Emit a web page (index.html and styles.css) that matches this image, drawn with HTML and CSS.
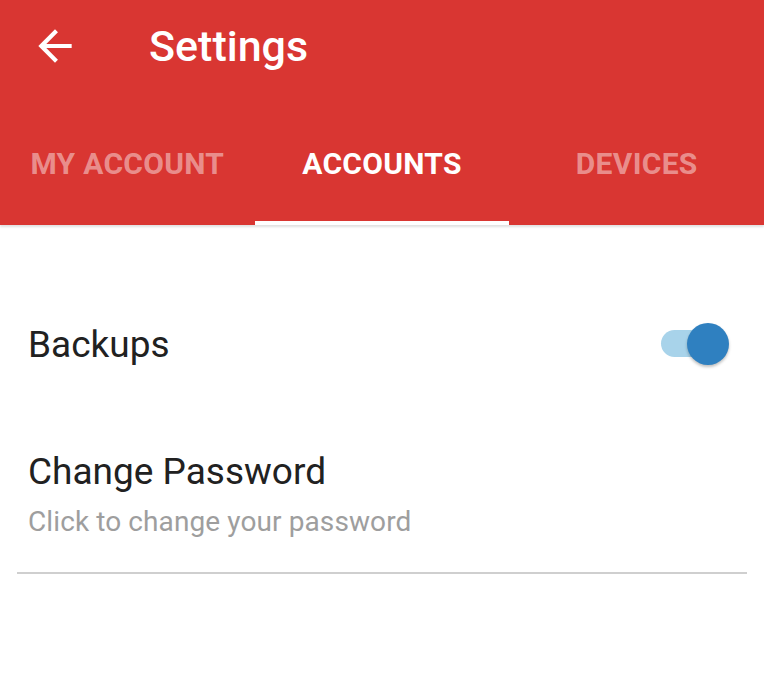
FILE: index.html
```html
<!DOCTYPE html>
<html>
<head>
<meta charset="utf-8">
<link rel="stylesheet" href="styles.css">
</head>
<body>
<header class="appbar">
  <div class="toolbar">
    <svg class="back" width="50" height="50" viewBox="0 0 24 24"><path d="M20 11H7.83l5.59-5.59L12 4l-8 8 8 8 1.41-1.41L7.83 13H20v-2z" fill="#fff"/></svg>
    <h1 class="title">Settings</h1>
  </div>
  <nav class="tabs">
    <div class="tab">MY ACCOUNT</div>
    <div class="tab active">ACCOUNTS</div>
    <div class="tab">DEVICES</div>
  </nav>
</header>
<main class="content">
  <div class="row row-switch">
    <span class="label">Backups</span>
    <span class="switch"><span class="track"></span><span class="thumb"></span></span>
  </div>
  <div class="row row-two">
    <span class="label">Change Password</span>
    <span class="sub">Click to change your password</span>
  </div>
  <hr class="divider">
</main>
</body>
</html>
```
FILE: styles.css
```css
html, body { margin: 0; padding: 0; background: #fff; }
body { font-family: Roboto, "Noto Sans", sans-serif; width: 764px; height: 686px; overflow: hidden; }
.appbar { background: #d93632; height: 225px; display: flex; flex-direction: column; box-shadow: 0 2px 2px rgba(0,0,0,0.12); position: relative; }
.toolbar { height: 92px; display: flex; align-items: center; }
.back { margin-left: 30px; }
.title { margin: 0 0 0 69px; color: #fff; font-size: 43px; font-weight: 500; line-height: 1; }
.tabs { display: flex; flex: 1; }
.tab { flex: 1; display: flex; align-items: center; justify-content: center; color: rgba(255,255,255,0.45); font-weight: 700; font-size: 30px; letter-spacing: 0.3px; padding-top: 14px; box-sizing: border-box; border-bottom: 4px solid transparent; }
.tab.active { color: #fff; border-bottom-color: #fff; }
.content { display: flex; flex-direction: column; }
.row { padding: 0 28px; }
.row-switch { display: flex; justify-content: space-between; align-items: center; margin-top: 98px; height: 42px; }
.label { font-size: 37px; color: #212121; line-height: 37px; }
.switch { position: relative; width: 70px; height: 42px; margin-right: 7px; }
.track { position: absolute; left: 2px; top: 7px; width: 54px; height: 27px; border-radius: 14px; background: #a8d3ea; }
.thumb { position: absolute; right: 0; top: 0; width: 42px; height: 42px; border-radius: 50%; background: #2f80c0; box-shadow: 0 2px 3px rgba(0,0,0,0.25); }
.row-two { display: flex; flex-direction: column; margin-top: 88px; }
.sub { font-size: 28px; line-height: 28px; letter-spacing: 0.1px; color: #9e9e9e; margin-top: 18px; }
.divider { border: 0; border-top: 2px solid #cfcfcf; margin: 36px 17px 0; }
```
